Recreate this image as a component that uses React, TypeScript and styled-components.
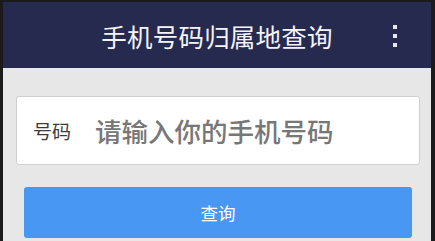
import styled, { createGlobalStyle } from "styled-components";

const GlobalStyle = createGlobalStyle`
  html, body {
    margin: 0;
    padding: 0;
    background: #1b1b1d;
    font-family: "Noto Sans CJK SC", "Noto Sans", sans-serif;
  }
`;

const Frame = styled.div`
  height: 241px;
  padding: 2px 4px 0 3px;
  box-sizing: border-box;
  overflow: hidden;
`;

const Screen = styled.main`
  height: 100%;
  background: #e7e7e7;
  display: flex;
  flex-direction: column;
`;

const Toolbar = styled.header`
  position: relative;
  height: 66px;
  flex-shrink: 0;
  background: #272a4f;
  display: flex;
  align-items: center;
  justify-content: center;
`;

const Title = styled.h1`
  margin: 0;
  font-size: 25.5px;
  font-weight: 400;
  color: #f4f4f8;
  letter-spacing: 0.2px;
`;

const MenuButton = styled.button`
  position: absolute;
  right: 34px;
  top: 23px;
  width: 4px;
  padding: 0;
  border: none;
  background: none;
  display: flex;
  flex-direction: column;
  gap: 5px;
`;

const Dot = styled.span`
  width: 4px;
  height: 4px;
  background: #e6e8f4;
`;

const Content = styled.section`
  display: flex;
  flex-direction: column;
  padding: 28px 11px 0 13px;
`;

const InputCard = styled.label`
  height: 69px;
  box-sizing: border-box;
  background: #fff;
  border: 1px solid #cfcfcf;
  border-radius: 3px;
  display: flex;
  align-items: center;
  padding-left: 16px;
`;

const FieldLabel = styled.span`
  font-size: 19px;
  color: #3c3c3c;
  width: 62px;
  flex-shrink: 0;
`;

const PhoneInput = styled.input`
  flex: 1;
  min-width: 0;
  border: none;
  outline: none;
  background: transparent;
  font-family: inherit;
  font-size: 26.5px;
  font-weight: 500;
  color: #333;
  padding: 0;

  &::placeholder {
    color: #777;
  }
`;

const QueryButton = styled.button`
  margin: 22px 8px 0 8px;
  height: 51px;
  border: none;
  border-radius: 3px;
  background: #4897f2;
  color: #fff;
  font-family: inherit;
  font-size: 17.5px;
  padding: 0;
`;

export default function App() {
  return (
    <>
      <GlobalStyle />
      <Frame>
        <Screen>
          <Toolbar>
            <Title>手机号码归属地查询</Title>
            <MenuButton aria-label="更多">
              <Dot />
              <Dot />
              <Dot />
            </MenuButton>
          </Toolbar>
          <Content>
            <InputCard>
              <FieldLabel>号码</FieldLabel>
              <PhoneInput placeholder="请输入你的手机号码" />
            </InputCard>
            <QueryButton>查询</QueryButton>
          </Content>
        </Screen>
      </Frame>
    </>
  );
}
